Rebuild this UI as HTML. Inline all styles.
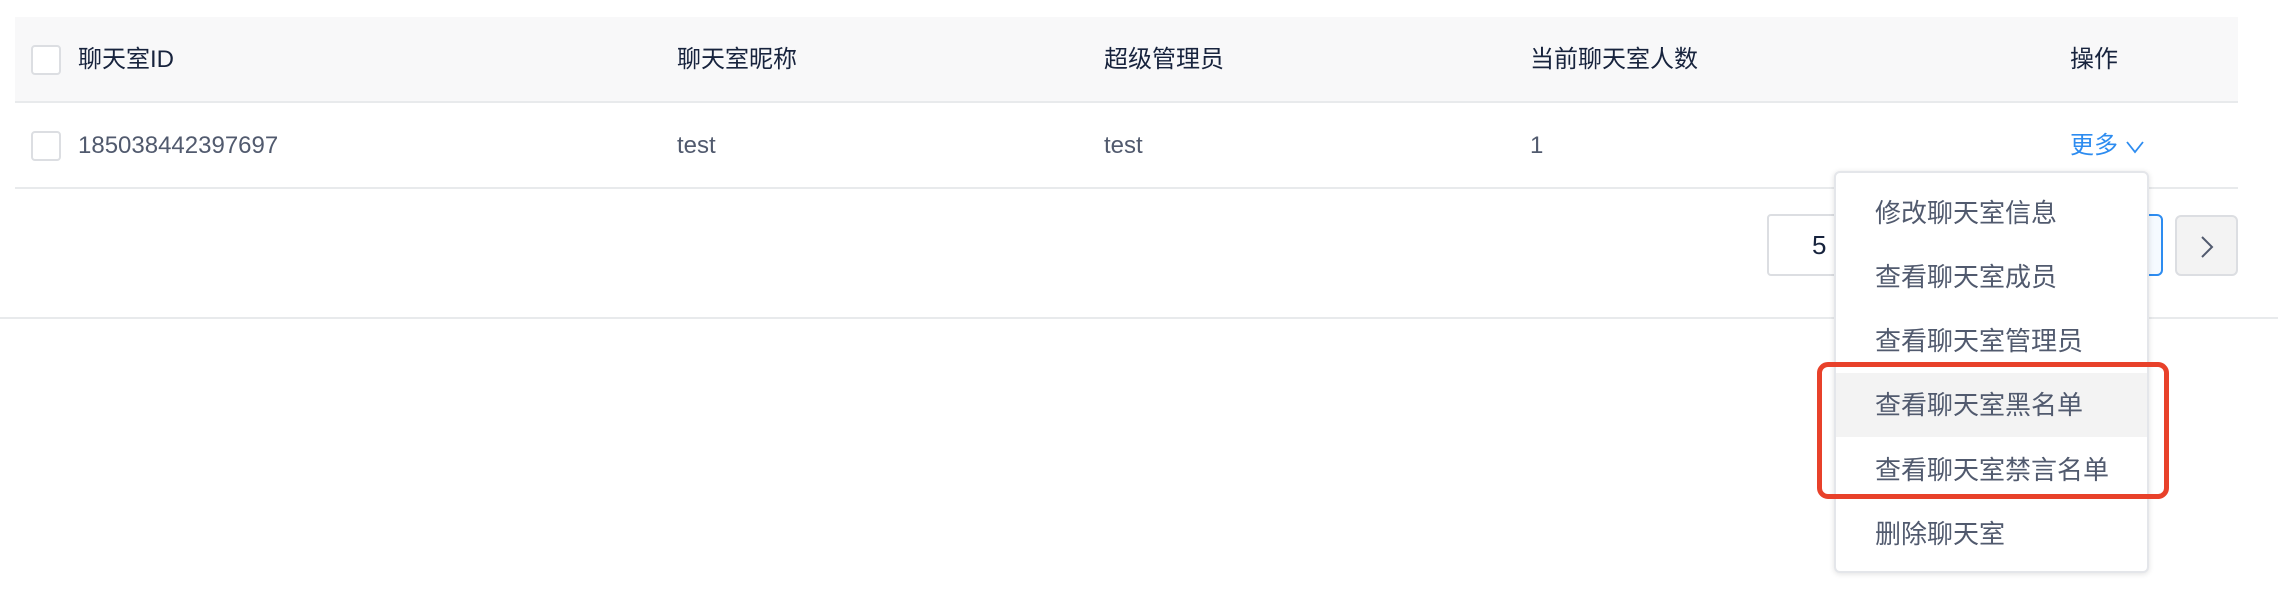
<!DOCTYPE html>
<html><head><meta charset="utf-8"><style>
*{margin:0;padding:0;box-sizing:border-box}
body{width:2278px;height:610px;background:#fff;position:relative;overflow:hidden;font-family:"Liberation Sans","Noto Sans CJK SC",sans-serif;color:#515a6e}
.abs{position:absolute}
.hdr{left:15px;top:17px;width:2223px;height:86px;background:#f8f8f9;border-bottom:2px solid #e8eaec}
.row{left:15px;top:103px;width:2223px;height:86px;border-bottom:2px solid #e8eaec}
.cb{width:30px;height:30px;border:2px solid #dcdee2;border-radius:4px;background:#fff}
.t{font-size:24px;line-height:30px;white-space:nowrap}
.h{color:#17233d}
.menu{left:1834px;top:171px;width:315px;height:402px;background:#fff;border:2px solid #e4e6ea;border-radius:6px;box-shadow:0 1px 6px rgba(0,0,0,.12)}
.mi{position:absolute;left:0;width:311px;height:64px;font-size:26px;line-height:64px;padding-left:39px;color:#515a6e}
</style></head><body>
<div class="abs hdr"></div>
<div class="abs row"></div>
<div class="abs cb" style="left:31px;top:45px"></div>
<div class="abs cb" style="left:31px;top:131px"></div>
<div class="abs t h" style="left:78px;top:45px">聊天室ID</div>
<div class="abs t h" style="left:677px;top:45px">聊天室昵称</div>
<div class="abs t h" style="left:1104px;top:45px">超级管理员</div>
<div class="abs t h" style="left:1530px;top:45px">当前聊天室人数</div>
<div class="abs t h" style="left:2070px;top:45px">操作</div>
<div class="abs t" style="left:78px;top:131px">185038442397697</div>
<div class="abs t" style="left:677px;top:131px">test</div>
<div class="abs t" style="left:1104px;top:131px">test</div>
<div class="abs t" style="left:1530px;top:131px">1</div>
<div class="abs t" style="left:2070px;top:131px;color:#2d8cf0">更多 <svg width="20" height="18" viewBox="0 0 20 18" style="vertical-align:middle"><path d="M2 4l8 10 8-10" fill="none" stroke="#2d8cf0" stroke-width="1.8"/></svg></div>
<div class="abs" style="left:1767px;top:214px;width:100px;height:62px;border:2px solid #dcdee2;border-radius:4px;font-size:26px;line-height:58px;padding-left:43px;color:#17233d">5</div>
<div class="abs" style="left:2080px;top:214px;width:83px;height:62px;border:2px solid #2d8cf0;border-radius:6px;background:#f5faff"></div>
<div class="abs" style="left:2175px;top:215px;width:63px;height:61px;border:2px solid #dcdee2;border-radius:6px;background:#f3f3f3"><svg width="59" height="57" viewBox="0 0 59 57"><path d="M25 20l10 10-10 10" fill="none" stroke="#515a6e" stroke-width="2"/></svg></div>
<div class="abs" style="left:0;top:317px;width:2278px;height:2px;background:#e8eaec"></div>
<div class="abs menu">
<div class="mi" style="top:8px">修改聊天室信息</div>
<div class="mi" style="top:72px">查看聊天室成员</div>
<div class="mi" style="top:136px">查看聊天室管理员</div>
<div class="mi" style="top:200px;background:#f3f3f3">查看聊天室黑名单</div>
<div class="mi" style="top:265px">查看聊天室禁言名单</div>
<div class="mi" style="top:329px">删除聊天室</div>
</div>
<div class="abs" style="left:1817px;top:362px;width:352px;height:137px;border:5px solid #e8412a;border-radius:11px"></div>
</body></html>
